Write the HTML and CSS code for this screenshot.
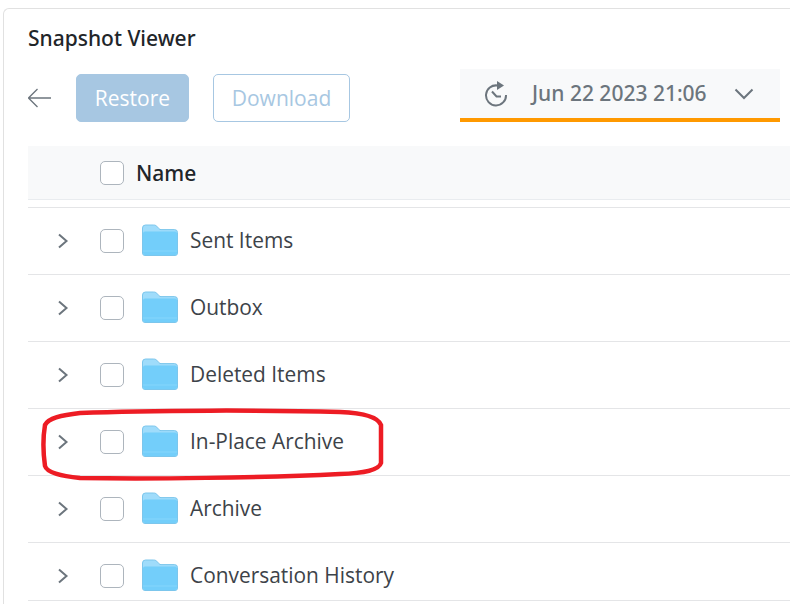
FILE: index.html
```html
<!DOCTYPE html>
<html lang="en">
<head>
<meta charset="utf-8">
<title>Snapshot Viewer</title>
<link rel="stylesheet" href="styles.css">
</head>
<body>
<svg width="0" height="0" class="defs">
  <defs>
    <symbol id="folder" viewBox="0 0 36 32">
      <path d="M.5 4A3 3 0 0 1 3.500 1h8c2 0 3 .8 4 2l1.400 1.600c.6.7 1.200 1 2.100 1h13.500a3 3 0 0 1 3 3V29a2.500 2.500 0 0 1-2.500 2.500H3A2.500 2.500 0 0 1 .5 29z" fill="#9fdcfb" stroke="#7cc6ec"/>
      <path d="M1 9.500a2 2 0 0 1 2-2h30a2 2 0 0 1 2 2V29a2 2 0 0 1-2 2H3a2 2 0 0 1-2-2z" fill="#73cefa"/>
      <path d="M1 26.500h34v1H1z" fill="#85d6fb"/>
    </symbol>
    <symbol id="chev" viewBox="0 0 12 16">
      <path d="M2 1.500 9.500 8 2 14.500" fill="none" stroke="#6c757d" stroke-width="2"/>
    </symbol>
  </defs>
</svg>
<main class="card">
  <h1 class="title">Snapshot Viewer</h1>
  <div class="toolbar">
    <svg class="back" width="24" height="20" viewBox="0 0 24 20"><path d="M23 10H.5M9.500 1 .5 10l9 9" fill="none" stroke="#6c757d" stroke-width="1.300"/></svg>
    <button class="btn btn-primary">Restore</button>
    <button class="btn btn-outline">Download</button>
    <div class="date-picker">
      <svg class="history" width="24" height="26" viewBox="0 0 24 26"><path d="M12.500 4.500A10 10 0 1 0 21 14" fill="none" stroke="#6c757d" stroke-width="2"/><path d="M12 0l7 4.500-7 4.500z" fill="#6c757d"/><path d="M7 10.500l4.500 5h4.500" fill="none" stroke="#6c757d" stroke-width="2"/></svg>
      <span class="date-text">Jun 22 2023 21:06</span>
      <svg class="caret" width="20" height="12" viewBox="0 0 20 12"><path d="M1.500 1.500 10 10l8.500-8.500" fill="none" stroke="#6c757d" stroke-width="2"/></svg>
    </div>
  </div>
  <div class="table-head">
    <span class="check"></span>
    <span class="head-name">Name</span>
  </div>
  <ul class="rows">
    <li class="row"><svg class="chev"><use href="#chev"/></svg><span class="check"></span><svg class="folder"><use href="#folder"/></svg><span class="label">Sent Items</span></li>
    <li class="row"><svg class="chev"><use href="#chev"/></svg><span class="check"></span><svg class="folder"><use href="#folder"/></svg><span class="label">Outbox</span></li>
    <li class="row"><svg class="chev"><use href="#chev"/></svg><span class="check"></span><svg class="folder"><use href="#folder"/></svg><span class="label">Deleted Items</span></li>
    <li class="row"><svg class="chev"><use href="#chev"/></svg><span class="check"></span><svg class="folder"><use href="#folder"/></svg><span class="label">In-Place Archive</span></li>
    <li class="row"><svg class="chev"><use href="#chev"/></svg><span class="check"></span><svg class="folder"><use href="#folder"/></svg><span class="label">Archive</span></li>
    <li class="row"><svg class="chev"><use href="#chev"/></svg><span class="check"></span><svg class="folder"><use href="#folder"/></svg><span class="label">Conversation History</span></li>
  </ul>
</main>
<svg class="annotation" width="346" height="74" viewBox="0 0 346 74"><path d="M40 6C110 3 230 3 300 5C325 6 338 10 341 18V56C339 63 325 66 300 67C220 71 110 72 40 71C22 69 7 66 5 59C3 45 3 30 5 18C8 11 22 8 40 6z" fill="none" stroke="#ed1c24" stroke-width="4.500"/></svg>
</body>
</html>
```
FILE: styles.css
```css
* { box-sizing: border-box; }
html, body { margin: 0; padding: 0; }
body {
  width: 790px;
  height: 604px;
  overflow: hidden;
  background: #fff;
  font-family: "Open Sans", "Noto Sans", sans-serif;
  position: relative;
}
.defs { position: absolute; }
.card {
  margin: 8px 0 0 3px;
  height: 620px;
  padding: 0 0 0 24px;
  border: 1px solid #e1e1e1;
  border-right: 0;
  border-bottom: 0;
  border-top-left-radius: 6px;
}
.title {
  margin: 0;
  height: 56px;
  padding-top: 15px;
  font-family: "Noto Sans", sans-serif;
  font-size: 21px;
  line-height: 28px;
  font-weight: 500;
  color: #212529;
}
.toolbar {
  display: flex;
  align-items: flex-start;
  height: 81px;
  position: relative;
}
.back { margin: 23px 24px 0 0; flex: none; }
.btn {
  height: 48px;
  margin-top: 9px;
  border-radius: 5px;
  font: 400 21px/28px "Open Sans", sans-serif;
  padding: 0;
}
.btn-primary {
  width: 113px;
  background: #a7c7e2;
  border: 1px solid #a7c7e2;
  color: #fff;
}
.btn-outline {
  width: 137px;
  margin-left: 24px;
  background: #fff;
  border: 1px solid #a7c7e2;
  color: #a7c7e2;
}
.date-picker {
  width: 320px;
  height: 53px;
  margin: 4px 0 0 110px;
  background: #f8f9fa;
  border-bottom: 4px solid #ff9900;
  display: flex;
  align-items: center;
  padding: 0 26px 0 25px;
  color: #6c757d;
}
.date-text {
  font-family: "Noto Sans", sans-serif;
  font-size: 21px;
  font-weight: 500;
  margin: 0 0 2px 23px;
  flex: 1;
  white-space: nowrap;
}
.table-head {
  height: 54px;
  background: #f8f9fa;
  display: flex;
  align-items: center;
  padding-left: 72px;
  border-bottom: 1px solid #e9ecef;
  margin-bottom: 7px;
}
.check {
  width: 24px;
  height: 24px;
  flex: none;
  background: #fff;
  border: 1px solid #adb5bd;
  border-radius: 5px;
}
.head-name {
  margin-left: 12px;
  font-family: "Noto Sans", sans-serif;
  font-size: 21px;
  font-weight: 500;
  color: #212529;
}
.rows { list-style: none; margin: 0; padding: 0; border-top: 1px solid #e4e5e7; }
.row {
  height: 67px;
  display: flex;
  align-items: center;
  padding-left: 29px;
  border-bottom: 1px solid #e4e5e7;
}
.row:last-child { height: 58px; padding-top: 9px; }
.chev { width: 12px; height: 16px; flex: none; margin-right: 31px; }
.folder { width: 36px; height: 32px; flex: none; margin: 0 0 2px 18px; }
.label { margin: 0 0 3px 12px; font-size: 20.9px; color: #3d4349; }
.annotation { position: absolute; left: 40px; top: 407px; }
```
